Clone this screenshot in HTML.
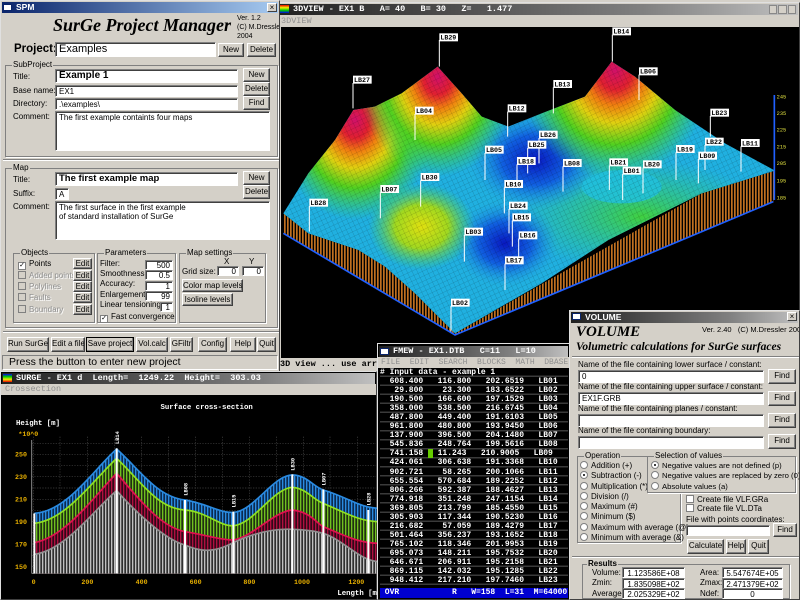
<!DOCTYPE html>
<html><head><meta charset="utf-8">
<style>
*{box-sizing:border-box;margin:0;padding:0}
body{width:800px;height:600px;overflow:hidden;background:#d4d0c8;font-family:"Liberation Sans",sans-serif;font-size:8px;color:#000;position:relative}
.a{position:absolute}
.win{position:absolute;background:#d4d0c8;border:1px solid;border-color:#e0e0e0 #404040 #404040 #e0e0e0;overflow:hidden}
.tb{position:absolute;left:1px;right:1px;height:11px;background:linear-gradient(90deg,#0a246a,#a6caf0);color:#fff;font-weight:bold;font-size:8.5px;line-height:11px;padding-left:14px;white-space:nowrap}
.tbg{background:linear-gradient(90deg,#202020,#808080 70%,#c0c0c0)}
.ic{position:absolute;left:2px;top:2px;width:9px;height:7px;background:#fff;border:1px solid #0a246a}
.x{position:absolute;right:2px;top:1px;width:10px;height:9px;background:#d4d0c8;border:1px solid;border-color:#fff #404040 #404040 #fff;color:#000;font-size:8px;line-height:7px;text-align:center;padding:0}
.btn{position:absolute;background:#d4d0c8;border:1px solid;border-color:#fff #404040 #404040 #fff;box-shadow:inset -1px -1px #808080;text-align:center;font-size:8px;line-height:12px;white-space:nowrap;overflow:hidden}
.in{position:absolute;background:#fff;border:1px solid;border-color:#808080 #fff #fff #808080;box-shadow:inset 1px 1px #404040;font-size:8px;line-height:11px;padding-left:3px;white-space:nowrap;overflow:hidden}
.grp{position:absolute;border:1px solid #808080;box-shadow:1px 1px #fff}
.gl{position:absolute;background:#d4d0c8;padding:0 1px;top:-6px;left:6px;font-size:8px;color:#000;white-space:nowrap}
.lb{position:absolute;font-size:8px;white-space:nowrap}
.dis{color:#909090;text-shadow:1px 1px #fff}
.cb{display:inline-block;width:8px;height:8px;background:#fff;border:1px solid #808080;vertical-align:-1px;margin-right:3px;font-size:7px;line-height:6px;text-align:center}
.rb{display:inline-block;width:8px;height:8px;background:#fff;border:1px solid #808080;border-radius:50%;vertical-align:-1px;margin-right:3px;position:relative}
.rb.on:after{content:"";position:absolute;left:2px;top:2px;width:2px;height:2px;background:#000;border-radius:50%}
.mono{font-family:"Liberation Mono","DejaVu Sans Mono",monospace;font-weight:bold}
</style></head><body>

<!-- 3D VIEW window -->
<div class="win" style="left:277px;top:2px;width:523px;height:370px;background:#d4d0c8">
 <div class="tb tbg" style="top:1px;font-family:'Liberation Mono',monospace;font-size:8.5px">3DVIEW - EX1 B &nbsp;&nbsp;A= 40 &nbsp;&nbsp;B= 30 &nbsp;&nbsp;Z= &nbsp;&nbsp;1.477</div>
 <div class="a" style="left:2px;top:2px;width:9px;height:8px;background:linear-gradient(#e00,#ee0,#0c0,#00e)"></div>
 <div class="a" style="right:3px;top:2px;width:27px;height:9px;display:flex;gap:1px"><div style="flex:1;background:#d4d0c8;border:1px solid #888"></div><div style="flex:1;background:#d4d0c8;border:1px solid #888"></div><div style="flex:1;background:#d4d0c8;border:1px solid #888"></div></div>
 <div class="a mono" style="left:3px;top:13px;font-size:8.5px;color:#909090;font-weight:normal">3DVIEW</div>
 <div class="a" style="left:3px;top:24px;right:0;height:331px;background:#000"></div>
 <div class="a mono" style="left:2px;top:356px;font-size:8.5px">3D view ... use arrow keys</div>
</div>
<svg class="a" style="left:275px;top:0" width="525" height="340" viewBox="0 0 1575 1020">
 <defs>
  <clipPath id="sc"><path d="M25,640 L100,520 L180,420 L235,330 L300,320 L380,280 L488,200 L560,280 L620,350 L700,380 L800,340 L930,290 L1010,185 L1080,230 L1200,330 L1350,430 L1500,512 L1280,580 L1000,720 L800,850 L540,1000 L420,880 L330,800 L250,750 L100,700 Z"/></clipPath>
  <radialGradient id="h1"><stop offset="0" stop-color="#d0106a"/><stop offset=".18" stop-color="#e02030"/><stop offset=".32" stop-color="#f08010"/><stop offset=".48" stop-color="#e0d010"/><stop offset=".68" stop-color="#50d020"/><stop offset="1" stop-color="#30d060" stop-opacity="0"/></radialGradient>
  <radialGradient id="h2"><stop offset="0" stop-color="#e0e010"/><stop offset=".5" stop-color="#a0d820"/><stop offset="1" stop-color="#40d060" stop-opacity="0"/></radialGradient>
  <radialGradient id="h3"><stop offset="0" stop-color="#0818c0"/><stop offset=".5" stop-color="#1060e0"/><stop offset="1" stop-color="#20a0e0" stop-opacity="0"/></radialGradient>
  <radialGradient id="h4"><stop offset="0" stop-color="#40d040"/><stop offset="1" stop-color="#30d080" stop-opacity="0"/></radialGradient>
  <pattern id="mesh" width="14" height="14" patternUnits="userSpaceOnUse" patternTransform="rotate(-25)"><path d="M0,0H14M0,0V14" stroke="#000" stroke-opacity=".35" stroke-width="1.5" fill="none"/></pattern>
  <pattern id="wall" width="9" height="10" patternUnits="userSpaceOnUse"><rect width="9" height="10" fill="#000"/><rect width="5" height="10" fill="#c07020"/></pattern>
 </defs>
 <path d="M25,640 L25,700 L540,1005 L1495,605 L1500,512 L1280,580 L540,1000 L420,880 L330,800 L250,750 L100,700 Z" fill="url(#wall)"/>
 <path d="M25,700 L540,1005 L1495,605" stroke="#2060ff" stroke-width="5" fill="none"/>
 <g clip-path="url(#sc)">
  <rect width="1575" height="1020" fill="#20b0e0"/>
  <ellipse cx="1100" cy="650" rx="380" ry="170" fill="url(#h4)"/>
  <ellipse cx="780" cy="480" rx="200" ry="150" fill="url(#h3)"/>
  <ellipse cx="690" cy="730" rx="160" ry="130" fill="url(#h3)"/>
  <ellipse cx="440" cy="680" rx="160" ry="130" fill="url(#h2)"/>
  <ellipse cx="240" cy="360" rx="240" ry="300" fill="url(#h1)"/>
  <ellipse cx="488" cy="230" rx="240" ry="300" fill="url(#h1)"/>
  <ellipse cx="1020" cy="210" rx="290" ry="330" fill="url(#h1)"/>
  <ellipse cx="1040" cy="560" rx="120" ry="50" fill="#20c0e0" opacity=".8"/>
  <rect width="1575" height="1020" fill="url(#mesh)"/>
 </g>
 <path d="M1498,285 V600" stroke="#2060ff" stroke-width="5"/>
 <g fill="#e0e040" font-size="16" font-family="Liberation Mono,monospace"><text x="1505" y="295">245</text><text x="1505" y="345">235</text><text x="1505" y="395">225</text><text x="1505" y="445">215</text><text x="1505" y="495">205</text><text x="1505" y="548">195</text><text x="1505" y="598">185</text></g>
 <g stroke="#fff" stroke-width="3">
  <path d="M493,120V200M1012,104V185M234,249V325M1092,224V300M835,262V340M698,335V410M420,342V420M1306,348V410M792,414V490M758,444V520M1290,435V510M1398,439V515M630,459V540M1203,457V540M1270,477V550M726,493V540M864,499V575M1003,497V570M1043,522V600M1104,503V580M688,562V640M437,541V620M316,577V655M103,618V695M702,627V700M712,662V740M731,716V790M568,705V785M690,791V870M528,918V995"/>
 </g>
 <g font-family="Liberation Mono,monospace" font-weight="bold" font-size="20">
  <g fill="#fff"><rect x="493" y="100" width="56" height="24"/><rect x="1012" y="82" width="56" height="24"/><rect x="234" y="227" width="56" height="24"/><rect x="1092" y="202" width="56" height="24"/><rect x="835" y="240" width="56" height="24"/><rect x="698" y="313" width="56" height="24"/><rect x="420" y="320" width="56" height="24"/><rect x="1306" y="326" width="56" height="24"/><rect x="792" y="392" width="56" height="24"/><rect x="758" y="422" width="56" height="24"/><rect x="1290" y="413" width="56" height="24"/><rect x="1398" y="417" width="56" height="24"/><rect x="630" y="437" width="56" height="24"/><rect x="1203" y="435" width="56" height="24"/><rect x="1270" y="455" width="56" height="24"/><rect x="726" y="471" width="56" height="24"/><rect x="864" y="477" width="56" height="24"/><rect x="1003" y="475" width="56" height="24"/><rect x="1043" y="500" width="56" height="24"/><rect x="1104" y="481" width="56" height="24"/><rect x="688" y="540" width="56" height="24"/><rect x="437" y="519" width="56" height="24"/><rect x="316" y="555" width="56" height="24"/><rect x="103" y="596" width="56" height="24"/><rect x="702" y="605" width="56" height="24"/><rect x="712" y="640" width="56" height="24"/><rect x="731" y="694" width="56" height="24"/><rect x="568" y="683" width="56" height="24"/><rect x="690" y="769" width="56" height="24"/><rect x="528" y="896" width="56" height="24"/></g>
  <g fill="#000"><text x="496" y="119">LB29</text><text x="1015" y="101">LB14</text><text x="237" y="246">LB27</text><text x="1095" y="221">LB06</text><text x="838" y="259">LB13</text><text x="701" y="332">LB12</text><text x="423" y="339">LB04</text><text x="1309" y="345">LB23</text><text x="795" y="411">LB26</text><text x="761" y="441">LB25</text><text x="1293" y="432">LB22</text><text x="1401" y="436">LB11</text><text x="633" y="456">LB05</text><text x="1206" y="454">LB19</text><text x="1273" y="474">LB09</text><text x="729" y="490">LB18</text><text x="867" y="496">LB08</text><text x="1006" y="494">LB21</text><text x="1046" y="519">LB01</text><text x="1107" y="500">LB20</text><text x="691" y="559">LB10</text><text x="440" y="538">LB30</text><text x="319" y="574">LB07</text><text x="106" y="615">LB28</text><text x="705" y="624">LB24</text><text x="715" y="659">LB15</text><text x="734" y="713">LB16</text><text x="571" y="702">LB03</text><text x="693" y="788">LB17</text><text x="531" y="915">LB02</text></g>
 </g>
</svg>

<!-- SPM window -->
<div class="win" style="left:0;top:0;width:280px;height:372px">
 <div class="tb" style="top:1px">SPM</div><div class="ic" style="top:3px"></div><div class="x" style="top:2px">×</div>
 <div class="a" style="left:52px;top:14px;font-family:'Liberation Serif',serif;font-style:italic;font-weight:bold;font-size:18px;white-space:nowrap">SurGe Project Manager</div>
 <div class="a" style="left:236px;top:13px;font-size:7px;line-height:9px;white-space:nowrap">Ver. 1.2<br>(C) M.Dressler<br>2004</div>
 <div class="lb" style="left:13px;top:42px;font-size:11.5px;font-weight:bold">Project:</div>
 <div class="in" style="left:54px;top:41px;width:161px;height:15px;font-size:11px;line-height:13px">Examples</div>
 <div class="btn" style="left:217px;top:42px;width:26px;height:14px">New</div>
 <div class="btn" style="left:246px;top:42px;width:29px;height:14px">Delete</div>
 <div class="grp" style="left:4px;top:64px;width:273px;height:92px"><div class="gl">SubProject</div></div>
 <div class="lb" style="left:12px;top:71px">Title:</div>
 <div class="in" style="left:54px;top:68px;width:183px;height:14px;font-weight:bold;font-size:10px;line-height:12px">Example 1</div>
 <div class="btn" style="left:242px;top:67px;width:27px;height:14px">New</div>
 <div class="lb" style="left:12px;top:85px">Base name:</div>
 <div class="in" style="left:54px;top:84px;width:183px;height:12px">EX1</div>
 <div class="btn" style="left:242px;top:81px;width:27px;height:14px">Delete</div>
 <div class="lb" style="left:12px;top:98px">Directory:</div>
 <div class="in" style="left:54px;top:97px;width:183px;height:12px">.\examples\</div>
 <div class="btn" style="left:242px;top:95px;width:27px;height:14px">Find</div>
 <div class="lb" style="left:12px;top:111px">Comment:</div>
 <div class="in" style="left:54px;top:110px;width:215px;height:40px">The first example containts four maps</div>
 <div class="a" style="left:2px;top:158px;width:276px;height:2px;border-top:1px solid #808080;border-bottom:1px solid #fff"></div>
 <div class="grp" style="left:4px;top:167px;width:273px;height:160px"><div class="gl">Map</div></div>
 <div class="lb" style="left:12px;top:174px">Title:</div>
 <div class="in" style="left:54px;top:171px;width:183px;height:14px;font-weight:bold;font-size:9.5px;line-height:12px">The first example map</div>
 <div class="btn" style="left:242px;top:170px;width:27px;height:14px">New</div>
 <div class="lb" style="left:12px;top:188px">Suffix:</div>
 <div class="in" style="left:54px;top:187px;width:14px;height:12px">A</div>
 <div class="btn" style="left:242px;top:184px;width:27px;height:14px">Delete</div>
 <div class="lb" style="left:12px;top:201px">Comment:</div>
 <div class="in" style="left:54px;top:200px;width:215px;height:39px;white-space:normal;line-height:9px;padding-top:1px">The first surface in the first example<br>of standard installation of SurGe</div>
 <div class="grp" style="left:12px;top:252px;width:82px;height:70px"><div class="gl">Objects</div></div>
 <div class="lb" style="left:17px;top:258px"><span class="cb">✓</span>Points</div>
 <div class="lb dis" style="left:17px;top:270px"><span class="cb" style="background:#d4d0c8"></span>Added points</div>
 <div class="lb dis" style="left:17px;top:281px"><span class="cb" style="background:#d4d0c8"></span>Polylines</div>
 <div class="lb dis" style="left:17px;top:292px"><span class="cb" style="background:#d4d0c8"></span>Faults</div>
 <div class="lb dis" style="left:17px;top:304px"><span class="cb" style="background:#d4d0c8"></span>Boundary</div>
 <div class="btn" style="left:72px;top:257px;width:19px;height:11px;line-height:9px">Edit</div>
 <div class="btn" style="left:72px;top:269px;width:19px;height:11px;line-height:9px">Edit</div>
 <div class="btn" style="left:72px;top:280px;width:19px;height:11px;line-height:9px">Edit</div>
 <div class="btn" style="left:72px;top:291px;width:19px;height:11px;line-height:9px">Edit</div>
 <div class="btn" style="left:72px;top:303px;width:19px;height:11px;line-height:9px">Edit</div>
 <div class="grp" style="left:96px;top:252px;width:79px;height:70px"><div class="gl">Parameters</div></div>
 <div class="lb" style="left:99px;top:258px">Filter:</div><div class="in" style="left:144px;top:259px;width:28px;height:10px;text-align:right;padding-right:2px;line-height:9px">500</div>
 <div class="lb" style="left:99px;top:268px">Smoothness:</div><div class="in" style="left:144px;top:269px;width:28px;height:10px;text-align:right;padding-right:2px;line-height:9px">0.5</div>
 <div class="lb" style="left:99px;top:278px">Accuracy:</div><div class="in" style="left:144px;top:280px;width:28px;height:10px;text-align:right;padding-right:2px;line-height:9px">1</div>
 <div class="lb" style="left:99px;top:289px">Enlargement:</div><div class="in" style="left:144px;top:290px;width:28px;height:10px;text-align:right;padding-right:2px;line-height:9px">99</div>
 <div class="lb" style="left:99px;top:299px">Linear tensioning:</div><div class="in" style="left:159px;top:301px;width:13px;height:10px;text-align:right;padding-right:2px;line-height:9px">1</div>
 <div class="lb" style="left:99px;top:311px"><span class="cb">✓</span>Fast convergence</div>
 <div class="grp" style="left:178px;top:252px;width:87px;height:70px"><div class="gl">Map settings</div></div>
 <div class="lb" style="left:223px;top:256px">X</div><div class="lb" style="left:248px;top:256px">Y</div>
 <div class="lb" style="left:181px;top:266px">Grid size:</div>
 <div class="in" style="left:216px;top:265px;width:22px;height:10px;text-align:right;padding-right:2px;line-height:9px">0</div>
 <div class="in" style="left:241px;top:265px;width:22px;height:10px;text-align:right;padding-right:2px;line-height:9px">0</div>
 <div class="btn" style="left:181px;top:278px;width:61px;height:13px;line-height:11px">Color map levels</div>
 <div class="btn" style="left:181px;top:292px;width:51px;height:13px;line-height:11px">Isoline levels</div>
 <div class="a" style="left:2px;top:330px;width:276px;height:2px;border-top:1px solid #808080;border-bottom:1px solid #fff"></div>
 <div class="btn" style="left:6px;top:336px;width:42px;height:15px">Run SurGe</div>
 <div class="btn" style="left:50px;top:336px;width:34px;height:15px">Edit a file</div>
 <div class="btn" style="left:85px;top:336px;width:48px;height:15px;border:1px solid #000">Save project</div>
 <div class="btn" style="left:135px;top:336px;width:32px;height:15px">Vol.calc</div>
 <div class="btn" style="left:169px;top:336px;width:23px;height:15px">GFiltr</div>
 <div class="btn" style="left:197px;top:336px;width:29px;height:15px">Config</div>
 <div class="btn" style="left:229px;top:336px;width:26px;height:15px">Help</div>
 <div class="btn" style="left:256px;top:336px;width:19px;height:15px">Quit</div>
 <div class="a" style="left:1px;top:354px;width:276px;height:15px;border:1px solid;border-color:#808080 #fff #fff #808080;font-size:10.5px;line-height:13px;padding-left:6px;white-space:nowrap">Press the button to enter new project</div>
</div>

<!-- SURGE cross-section -->
<div class="win" style="left:0;top:371px;width:377px;height:229px;background:#000">
 <div class="tb tbg" style="top:1px;font-family:'Liberation Mono',monospace">SURGE - EX1 d &nbsp;Length= &nbsp;1249.22 &nbsp;Height= &nbsp;303.03</div>
 <div class="a" style="left:2px;top:2px;width:9px;height:8px;background:linear-gradient(#00e,#0c0,#ee0,#e00)"></div>
 <div class="a mono" style="left:0;top:12px;width:377px;height:11px;background:#d4d0c8;color:#909090;font-weight:normal;font-size:8.5px;padding-left:4px">Crossection</div>
</div>
<svg class="a" style="left:0;top:360px" width="380" height="240" viewBox="0 0 1140 720">
 <defs>
  <pattern id="pb" width="9" height="10" patternUnits="userSpaceOnUse"><rect width="9" height="10" fill="#0a2a50"/><rect width="4" height="10" fill="#2a8ae0"/></pattern>
  <pattern id="pg" width="9" height="10" patternUnits="userSpaceOnUse"><rect width="9" height="10" fill="#203010"/><rect width="4" height="10" fill="#70c020"/></pattern>
  <pattern id="pr" width="9" height="10" patternUnits="userSpaceOnUse"><rect width="9" height="10" fill="#300818"/><rect width="4" height="10" fill="#b01040"/></pattern>
  <pattern id="pw" width="9" height="10" patternUnits="userSpaceOnUse"><rect width="9" height="10" fill="#303030"/><rect width="4" height="10" fill="#c0c0c0"/></pattern>
 </defs>
 <text x="620" y="147" fill="#fff" font-family="Liberation Mono,monospace" font-weight="bold" font-size="22" text-anchor="middle">Surface cross-section</text>
 <text x="48" y="195" fill="#fff" font-family="Liberation Mono,monospace" font-weight="bold" font-size="22">Height [m]</text>
 <text x="55" y="228" fill="#e8b000" font-family="Liberation Mono,monospace" font-weight="bold" font-size="20">*10^0</text>
 <g stroke="#404040" stroke-width="2" stroke-dasharray="4 4">
  <path d="M100,230V640M180,230V640M262,230V640M343,230V640M425,230V640M505,230V640M587,230V640M668,230V640M748,230V640M830,230V640M910,230V640M990,230V640M1073,230V640M95,250H1140M95,283H1140M95,316H1140M95,350H1140M95,384H1140M95,418H1140M95,451H1140M95,485H1140M95,518H1140M95,552H1140M95,586H1140M95,620H1140"/>
 </g>
 <path d="M95,640 H1140 M95,640 V240" stroke="#888" stroke-width="3"/>
 <path d="M103,640 L103,460 C200,455 280,330 350,267 C420,330 470,410 555,420 C620,430 660,460 700,457 C760,455 820,345 877,345 C920,345 940,380 970,390 C1040,410 1080,445 1140,445 L1140,640Z" fill="url(#pb)"/>
 <path d="M103,640 L103,490 C200,480 280,360 350,295 C420,360 470,445 555,450 C620,455 660,500 700,497 C760,493 820,385 877,382 C920,385 940,420 970,430 C1040,460 1080,485 1140,485 L1140,640Z" fill="url(#pg)"/>
 <path d="M103,640 L103,548 C200,530 290,400 350,340 C420,420 480,500 555,515 C620,525 660,540 700,540 C760,530 820,455 877,450 C930,455 950,490 970,500 C1040,530 1080,550 1140,550 L1140,640Z" fill="url(#pr)"/>
 <path d="M103,640 L103,583 C200,570 290,440 350,392 C420,470 500,540 555,555 C600,575 640,580 700,548 C760,520 820,505 877,508 C930,510 950,515 970,520 C1040,545 1080,605 1140,605 L1140,640Z" fill="url(#pw)"/>
 <g fill="none" stroke-width="5">
  <path d="M103,460 C200,455 280,330 350,267 C420,330 470,410 555,420 C620,430 660,460 700,457 C760,455 820,345 877,345 C920,345 940,380 970,390 C1040,410 1080,445 1140,445" stroke="#2a8ae0"/>
  <path d="M103,490 C200,480 280,360 350,295 C420,360 470,445 555,450 C620,455 660,500 700,497 C760,493 820,385 877,382 C920,385 940,420 970,430 C1040,460 1080,485 1140,485" stroke="#90e020"/>
  <path d="M103,548 C200,530 290,400 350,340 C420,420 480,500 555,515 C620,525 660,540 700,540 C760,530 820,455 877,450 C930,455 950,490 970,500 C1040,530 1080,550 1140,550" stroke="#e01050"/>
  <path d="M103,583 C200,570 290,440 350,392 C420,470 500,540 555,555 C600,575 640,580 700,548 C760,520 820,505 877,508 C930,510 950,515 970,520 C1040,545 1080,605 1140,605" stroke="#909090"/>
 </g>
 <path d="M103,460V640M350,265V640M555,420V640M700,455V640M877,343V640M970,388V640M1105,450V640" stroke="#fff" stroke-width="6"/>
 <g fill="#fff" font-family="Liberation Mono,monospace" font-size="16" font-weight="bold">
  <text transform="translate(357,252) rotate(-90)">LB14</text><text transform="translate(562,407) rotate(-90)">LB08</text><text transform="translate(707,442) rotate(-90)">LB15</text><text transform="translate(884,332) rotate(-90)">LB30</text><text transform="translate(977,376) rotate(-90)">LB07</text><text transform="translate(1112,436) rotate(-90)">LB28</text>
 </g>
 <g fill="#e8b000" font-family="Liberation Mono,monospace" font-weight="bold" font-size="20">
  <text x="45" y="290">250</text><text x="45" y="357">230</text><text x="45" y="425">210</text><text x="45" y="492">190</text><text x="45" y="559">170</text><text x="45" y="627">150</text>
  <text x="95" y="672">0</text><text x="244" y="672">200</text><text x="407" y="672">400</text><text x="569" y="672">600</text><text x="730" y="672">800</text><text x="882" y="672">1000</text><text x="1045" y="672">1200</text>
 </g>
 <text x="1012" y="705" fill="#fff" font-family="Liberation Mono,monospace" font-weight="bold" font-size="22">Length [m]</text>
</svg>

<!-- FMEW -->
<div class="win" style="left:377px;top:343px;width:193px;height:257px;background:#000">
 <div class="tb tbg" style="top:2px;font-family:'Liberation Mono',monospace">FMEW - EX1.DTB &nbsp;&nbsp;C=11 &nbsp;&nbsp;L=10</div>
 <div class="ic" style="top:4px"></div>
 <div class="a mono" style="left:0;top:13px;width:193px;height:11px;background:#d4d0c8;color:#909090;font-weight:normal;font-size:8px;line-height:11px;padding-left:3px;white-space:nowrap">FILE &nbsp;EDIT &nbsp;SEARCH &nbsp;BLOCKS &nbsp;MATH &nbsp;DBASE</div>
 <pre class="a mono" style="left:2px;top:24px;width:188px;font-size:8px;line-height:9.05px;color:#fff;background:repeating-linear-gradient(#000 0 7.5px,#3a3a3a 7.5px 9.05px)"># Input data - example 1
  608.400   116.800   202.6519   LB01
   29.800    23.300   183.6522   LB02
  190.500   166.600   197.1529   LB03
  358.000   538.500   216.6745   LB04
  487.800   449.400   191.6103   LB05
  961.800   480.800   193.9450   LB06
  137.900   396.500   204.1480   LB07
  545.836   248.764   199.5616   LB08
  741.158 <span style="background:#6c0">&nbsp;</span> 11.243   210.9005   LB09
  424.061   306.638   191.3368   LB10
  902.721    58.265   200.1066   LB11
  655.554   570.684   189.2252   LB12
  806.266   592.387   188.4627   LB13
  774.918   351.248   247.1154   LB14
  369.805   213.799   185.4550   LB15
  305.903   117.344   190.5230   LB16
  216.682    57.059   189.4279   LB17
  501.464   356.237   193.1652   LB18
  765.102   118.346   201.9953   LB19
  695.073   148.211   195.7532   LB20
  646.671   206.911   195.2158   LB21
  869.115   142.032   195.1285   LB22
  948.412   217.210   197.7460   LB23</pre>
 <pre class="a mono" style="left:2px;top:244px;width:188px;height:10px;background:#0000d0;color:#fff;font-size:8px;line-height:10px"> OVR           R   W=158  L=31  M=64000</pre>
</div>

<!-- VOLUME -->
<div class="win" style="left:569px;top:310px;width:231px;height:290px">
 <div class="tb tbg" style="top:1px">VOLUME</div><div class="ic"></div><div class="x">×</div>
 <div class="a" style="left:6px;top:13px;font-family:'Liberation Serif',serif;font-style:italic;font-weight:bold;font-size:15px">VOLUME</div>
 <div class="a" style="left:132px;top:14px;font-size:7.5px;white-space:nowrap">Ver. 2.40 &nbsp;&nbsp;(C) M.Dressler 2004</div>
 <div class="a" style="left:6px;top:30px;font-family:'Liberation Serif',serif;font-style:italic;font-weight:bold;font-size:11.5px;white-space:nowrap">Volumetric calculations for SurGe surfaces</div>
 <div class="a" style="left:2px;top:45px;width:227px;height:2px;border-top:1px solid #808080;border-bottom:1px solid #fff"></div>
 <div class="lb" style="left:8px;top:49px">Name of the file containing lower surface / constant:</div>
 <div class="in" style="left:8px;top:59px;width:186px;height:13px">0</div><div class="btn" style="left:198px;top:58px;width:28px;height:15px">Find</div>
 <div class="lb" style="left:8px;top:71px">Name of the file containing upper surface / constant:</div>
 <div class="in" style="left:8px;top:81px;width:186px;height:13px">EX1F.GRB</div><div class="btn" style="left:198px;top:80px;width:28px;height:15px">Find</div>
 <div class="lb" style="left:8px;top:93px">Name of the file containing planes / constant:</div>
 <div class="in" style="left:8px;top:103px;width:186px;height:13px"></div><div class="btn" style="left:198px;top:102px;width:28px;height:15px">Find</div>
 <div class="lb" style="left:8px;top:115px">Name of the file containing boundary:</div>
 <div class="in" style="left:8px;top:125px;width:186px;height:13px"></div><div class="btn" style="left:198px;top:123px;width:28px;height:15px">Find</div>
 <div class="grp" style="left:7px;top:145px;width:104px;height:87px"><div class="gl">Operation</div></div>
 <div class="lb" style="left:10px;top:150px;line-height:10.3px"><span class="rb"></span>Addition (+)<br><span class="rb on"></span>Subtraction (-)<br><span class="rb"></span>Multiplication (*)<br><span class="rb"></span>Division (/)<br><span class="rb"></span>Maximum (#)<br><span class="rb"></span>Minimum ($)<br><span class="rb"></span>Maximum with average (@)<br><span class="rb"></span>Minimum with average (&amp;)</div>
 <div class="grp" style="left:77px;top:145px;width:149px;height:37px;background:#d4d0c8"><div class="gl">Selection of values</div></div>
 <div class="lb" style="left:81px;top:150px;line-height:10.3px;font-size:7.7px"><span class="rb on"></span>Negative values are not defined (p)<br><span class="rb"></span>Negative values are replaced by zero (0)<br><span class="rb"></span>Absolute values (a)</div>
 <div class="lb" style="left:116px;top:184px;line-height:9px"><span class="cb"></span>Create file VLF.GRa<br><span class="cb"></span>Create file VL.DTa</div>
 <div class="lb" style="left:116px;top:204px">File with points coordinates:</div>
 <div class="in" style="left:116px;top:214px;width:84px;height:11px"></div><div class="btn" style="left:203px;top:212px;width:24px;height:14px">Find</div>
 <div class="btn" style="left:117px;top:228px;width:37px;height:15px">Calculate</div>
 <div class="btn" style="left:156px;top:228px;width:20px;height:15px">Help</div>
 <div class="btn" style="left:178px;top:228px;width:21px;height:15px">Quit</div>
 <div class="a" style="left:2px;top:245px;width:227px;height:2px;border-top:1px solid #808080;border-bottom:1px solid #fff"></div>
 <div class="grp" style="left:12px;top:253px;width:208px;height:35px"><div class="gl" style="font-weight:bold;left:4px">Results</div></div>
 <div class="lb" style="left:22px;top:257px">Volume:</div><div class="in" style="left:52px;top:256px;width:63px;height:11px;text-align:center;padding:0">1.123586E+08</div>
 <div class="lb" style="left:22px;top:267px">Zmin:</div><div class="in" style="left:52px;top:267px;width:63px;height:11px;text-align:center;padding:0">1.835098E+02</div>
 <div class="lb" style="left:22px;top:278px">Average:</div><div class="in" style="left:52px;top:277px;width:63px;height:11px;text-align:center;padding:0">2.025329E+02</div>
 <div class="lb" style="left:130px;top:257px">Area:</div><div class="in" style="left:152px;top:256px;width:61px;height:11px;text-align:center;padding:0">5.547674E+05</div>
 <div class="lb" style="left:130px;top:267px">Zmax:</div><div class="in" style="left:152px;top:267px;width:61px;height:11px;text-align:center;padding:0">2.471379E+02</div>
 <div class="lb" style="left:130px;top:278px">Ndef:</div><div class="in" style="left:152px;top:277px;width:61px;height:11px;text-align:center;padding:0">0</div>
</div>
</body></html>
